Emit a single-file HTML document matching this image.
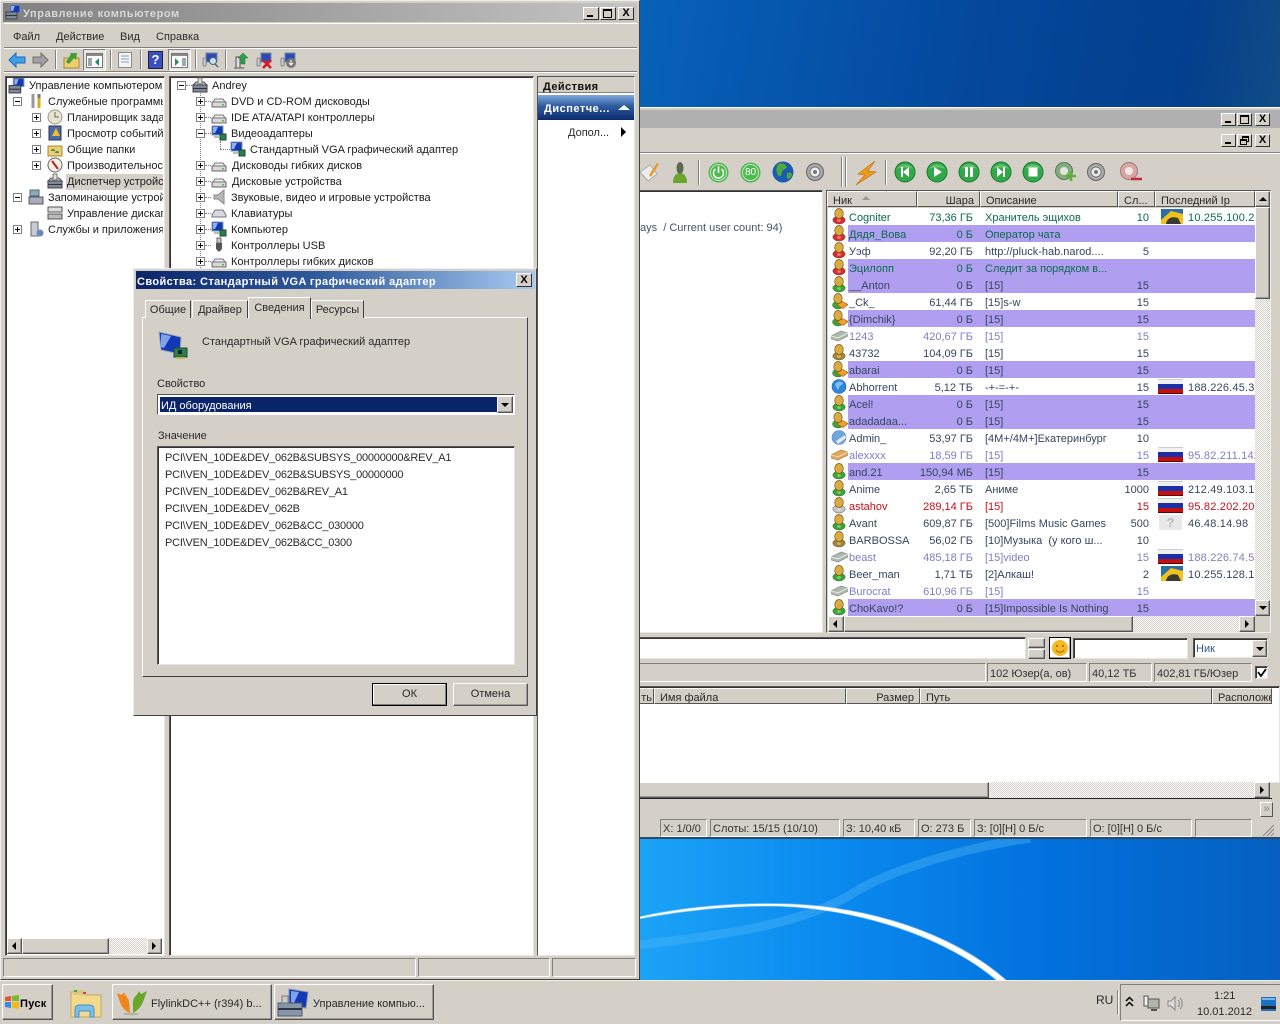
<!DOCTYPE html>
<html lang="ru"><head><meta charset="utf-8"><title>Screen</title>
<style>
*{box-sizing:border-box}
html,body{margin:0;padding:0;width:1280px;height:1024px;overflow:hidden;background:#0a5bb0}
body{position:relative;font:11px/16px "Liberation Sans","DejaVu Sans",sans-serif;color:#2a2a2a}
.a,.t,.ic{position:absolute}
.t{white-space:nowrap;margin-top:1px}
.pci{letter-spacing:-.22px}
.up{position:absolute;background:#d4d0c8;border:1px solid;border-color:#fff #555 #555 #fff;box-shadow:inset -1px -1px 0 #999}
.dn{position:absolute;background:#d4d0c8;border:1px solid;border-color:#808080 #fff #fff #808080}
.w{position:absolute;background:#fff;border:1px solid;border-color:#555 #e8e6e0 #e8e6e0 #555;box-shadow:inset 1px 1px 0 #333}
.g{position:absolute;background:#d4d0c8}
.sep{position:absolute;width:2px;background:linear-gradient(90deg,#808080 50%,#fff 50%)}
.x{position:absolute;width:9px;height:9px;background:#fff;border:1px solid #808080}
.x:before{content:"";position:absolute;left:1px;top:3px;width:5px;height:1px;background:#000}
.x.p:after{content:"";position:absolute;left:3px;top:1px;width:1px;height:5px;background:#000}
.dh{position:absolute;height:0;border-top:1px dotted #808080}
.dv{position:absolute;width:0;border-left:1px dotted #808080}
.ch{position:absolute;background:repeating-conic-gradient(#fff 0 25%,#d4d0c8 0 50%) 0 0/2px 2px}
.tb{position:absolute;width:15px;height:13px;background:#d4d0c8;border:1px solid;border-color:#fff #303030 #303030 #fff;font:bold 11px/11px "Liberation Sans",sans-serif;text-align:center;color:#000}
.tb.big{width:16px}
.tb .mx{position:absolute;left:2px;top:1px;width:9px;height:9px;border:1px solid #000;border-top-width:2px}
.tb .mn{position:absolute;left:3px;bottom:2px;width:6px;height:2px;background:#000}
.tb .rs{position:absolute;left:4px;top:1px;width:7px;height:6px;border:1px solid #000;border-top-width:2px}
.tb .rs2{position:absolute;left:2px;top:4px;width:7px;height:6px;border:1px solid #000;border-top-width:2px;background:#d4d0c8}
.ar{position:absolute;width:0;height:0;border-style:solid;border-color:transparent}
/* user list */
#ul{position:absolute;left:828px;top:208px;width:427px;height:408px;background:#fff;overflow:hidden}
.r{position:relative;height:17px;width:427px;line-height:21px;color:#36465f}
.r.v{background:linear-gradient(90deg,#fff 20px,#b09ff0 20px)}
.r.m{color:#0b6a4f}.r.l{color:#7f7fc4}.r.d{color:#c80f1c}
.r svg{position:absolute;left:3px;top:0;width:17px;height:17px}
.r b,.r i,.r u,.r s,.r em{position:absolute;font-weight:400;font-style:normal;text-decoration:none;white-space:nowrap}
.r b{left:21px}
.r i{right:282px}
.r u{left:157px}
.r s{right:106px}
.r em{left:360px;letter-spacing:.2px}
.f{position:absolute;left:330px;top:1px;width:25px;height:15px;background:linear-gradient(#f0f0f0 0 33%,#1a2fa8 33% 66%,#c40f0f 66%);box-shadow:inset 0 -1px 0 #600,inset 0 1px 0 #ccc}
.h{position:absolute;top:191px;height:16px;background:#d4d0c8;border:1px solid;border-color:#fff #555 #555 #fff;line-height:18px;padding:0 5px;white-space:nowrap;overflow:hidden}
.h2{position:absolute;top:688px;height:16px;background:#d4d0c8;border:1px solid;border-color:#fff #555 #555 #fff;line-height:18px;padding:0 5px;white-space:nowrap;overflow:hidden}
.tree{color:#1c1c1c}
.sb{position:absolute;background:#d4d0c8;border:1px solid;border-color:#808080 #fff #fff #808080;line-height:21px;padding-left:2px;white-space:nowrap;overflow:hidden;color:#333}
.sb.b{line-height:19px}
</style></head>
<body>
<svg width="0" height="0" style="position:absolute">
<defs>
<symbol id="u" viewBox="0 0 17 17"><ellipse cx="8" cy="12" rx="6.200" ry="4" fill="currentColor" stroke="#555" stroke-width=".5"/><ellipse cx="8" cy="5.500" rx="4.300" ry="5" fill="#d9ab42" stroke="#7a5c14" stroke-width=".7"/><ellipse cx="8" cy="12.500" rx="2" ry="1.500" fill="#fff" opacity=".35"/></symbol>
<symbol id="ub" viewBox="0 0 17 17"><ellipse cx="7" cy="12" rx="5.500" ry="4" fill="#3aa535" stroke="#555" stroke-width=".5"/><ellipse cx="7" cy="5.500" rx="4.200" ry="5" fill="#d9ab42" stroke="#7a5c14" stroke-width=".7"/><path d="M6 12l5.500-3.500 5.500 3-5 4z" fill="#f2a02c" stroke="#a55c10" stroke-width=".7"/></symbol>
<symbol id="sv" viewBox="0 0 17 17"><path d="M0 9l10-5 7 2v3L7 14l-7-2z" fill="#aeb8ae" stroke="#7f8a7f" stroke-width=".6"/><path d="M0 9l7 2 10-5" fill="none" stroke="#e5ece5"/></symbol>
<symbol id="svb" viewBox="0 0 17 17"><path d="M0 9l10-5 7 2v3L7 14l-7-2z" fill="#e8a550" stroke="#9a7a50" stroke-width=".6"/><path d="M0 9l7 2 10-5" fill="none" stroke="#ddd"/></symbol>
<symbol id="gl" viewBox="0 0 17 17"><circle cx="8" cy="8.500" r="7" fill="#2f86dc" stroke="#1c5ca8" stroke-width=".6"/><path d="M4 6c3-3 6-3 8-1-1 3-4 2-4 5s-2 2-4-4z" fill="#7cc0f4"/></symbol>
<symbol id="gp" viewBox="0 0 17 17"><circle cx="8" cy="8.500" r="7" fill="#6ea6dc" stroke="#5a86b8" stroke-width=".6"/><path d="M5 12l9-6 1 3-8 6z" fill="#e4ecf2"/></symbol>
<symbol id="img" viewBox="0 0 25 15"><rect x="3" width="22" height="15" fill="#2c6ea5"/><path d="M3 11L13 2l12 3v10H3z" fill="#f0c31c"/><path d="M8 15c1-6 6-8 12-6l3 6z" fill="#3a3a2e"/></symbol>
<symbol id="pc" viewBox="0 0 32 32"><path d="M2 2l22 5-1 17-19-4z" fill="#1238b8" stroke="#9aa7b4"/><path d="M4 4l10 2-7 12-3-1z" fill="#7ea4ee"/><path d="M6 23l14 4-2 3-12-3z" fill="#c9cfd4"/><rect x="17" y="18" width="13" height="9" fill="#2e7d4a" stroke="#12502c"/><rect x="21" y="20" width="4" height="4" fill="#123"/><rect x="19" y="27" width="9" height="2" fill="#c9b34a"/></symbol>
<symbol id="pm" viewBox="0 0 16 16"><rect x="1" y="1" width="11" height="9" fill="#1238b8" stroke="#8a97a4"/><path d="M2 2h5l-3 6H2z" fill="#8eaeee"/><rect x="9" y="9" width="6" height="6" fill="#2e7d4a" stroke="#12502c"/><rect x="3" y="11" width="5" height="2" fill="#bbb"/></symbol>
<symbol id="dr" viewBox="0 0 16 16"><path d="M1 9h14v5H1z" fill="#d8d8d8" stroke="#666"/><path d="M2 9l2-3h8l2 3z" fill="#eee" stroke="#777"/><rect x="11" y="11" width="2" height="1.500" fill="#3c3"/></symbol>
<symbol id="tbx" viewBox="0 0 16 16"><rect x="1" y="8" width="14" height="7" fill="#7a8a9a" stroke="#444"/><path d="M1 8l3-3h8l3 3z" fill="#aebac6" stroke="#555"/><rect x="6" y="1" width="4" height="6" fill="#e0e0d0" stroke="#777"/><rect x="1" y="11" width="14" height="1" fill="#333"/></symbol>
<symbol id="mg" viewBox="0 0 16 16"><rect x="5" y="1" width="10" height="8" fill="#1238b8" stroke="#8a97a4"/><path d="M6 2h4l-2 5H6z" fill="#8eaeee"/><rect x="1" y="8" width="11" height="7" fill="#7a8a9a" stroke="#444"/><rect x="1" y="11" width="11" height="1" fill="#333"/></symbol>
<symbol id="gb" viewBox="0 0 22 22"><circle cx="11" cy="11" r="10" fill="#33a84a" stroke="#1b7a30"/><path d="M3 8C6 2 16 2 19 8 15 6 7 6 3 8z" fill="#77d080" opacity=".7"/></symbol>
<symbol id="sp" viewBox="0 0 20 20"><circle cx="10" cy="10" r="8.500" fill="#a9a9a9" stroke="#666"/><circle cx="10" cy="10" r="5" fill="#ededed" stroke="#7a7a7a"/><circle cx="10" cy="10" r="2" fill="#777"/></symbol>
</defs></svg>

<!-- wallpaper -->
<div class="a" style="left:0;top:0;width:1280px;height:980px;background:#0a5bb0"></div>
<div class="a" style="left:638px;top:0;width:642px;height:108px;background:linear-gradient(100deg,#0862b8 0%,#0555ac 25%,#04479a 55%,#033f8c 85%,#114c86 100%)"></div>
<svg class="a" style="left:638px;top:836px" width="642" height="146" viewBox="638 836 642 146">
<defs><linearGradient id="wp" x1="0" x2="1" y1="0" y2="0"><stop offset="0" stop-color="#1ca3f7"/><stop offset=".3" stop-color="#0a8aee"/><stop offset=".65" stop-color="#0270dc"/><stop offset="1" stop-color="#0560c0"/></linearGradient></defs>
<rect x="638" y="836" width="642" height="146" fill="url(#wp)"/>
<path d="M640 945C720 935 800 925 850 895 880 875 950 850 1030 838" fill="none" stroke="#4fb6f8" stroke-width="9" opacity=".4"/>
<path d="M640 917C680 908 730 903 780 904 860 905 950 930 1008 982H999C947 937 860 909 780 906 730 905 680 911 640 918.500z" fill="#bfe8fd" stroke="#bfe8fd" stroke-width="1.500" opacity=".5"/>
<path d="M640 917C680 908 730 903 780 904 860 905 950 930 1008 982H999C947 937 860 909 780 906 730 905 680 911 640 918.500z" fill="#fff"/>
</svg>

<!-- right window -->
<div class="g" style="left:636px;top:107px;width:644px;height:732px;border-top:1px solid #fff;border-bottom:2px solid #2a4a6a"></div>
<div class="a" style="left:638px;top:110px;width:642px;height:18px;background:#b0b0b0"></div>
<div class="tb" style="left:1221px;top:113px"><span class="mn"></span></div><div class="tb" style="left:1237px;top:113px"><span class="mx"></span></div><div class="tb" style="left:1255px;top:113px">X</div>
<div class="tb" style="left:1221px;top:134px"><span class="mn"></span></div><div class="tb" style="left:1237px;top:134px"><span class="rs"></span><span class="rs2"></span></div><div class="tb" style="left:1255px;top:134px">X</div>
<div class="a" style="left:638px;top:152px;width:642px;height:2px;background:linear-gradient(#808080 50%,#fff 50%)"></div>

<svg class="ic" style="left:640px;top:161px" width="20" height="22" viewBox="0 0 20 22"><path d="M0 11L10 4l7 9-9 7z" fill="#eee" stroke="#aaa"/><path d="M9 14L17 2l2 1-8 13z" fill="#e49a2c"/></svg>
<svg class="ic" style="left:671px;top:160px" width="18" height="24" viewBox="0 0 18 24"><path d="M2 23c0-7 3-10 7-10s7 3 7 10z" fill="#6aa62a"/><ellipse cx="9" cy="8" rx="3.500" ry="6" fill="#5d6a4c"/></svg>
<div class="sep" style="left:698px;top:160px;height:25px"></div>
<svg class="ic" style="left:708px;top:162px" width="21" height="21" viewBox="0 0 21 21"><circle cx="10.500" cy="10.500" r="10" fill="#4fb84f"/><circle cx="10.500" cy="10.500" r="8" fill="none" stroke="#bfeabf"/><path d="M7.500 7a5 5 0 1 0 6 0M10.500 4v7" fill="none" stroke="#fff" stroke-width="1.500"/></svg>
<svg class="ic" style="left:740px;top:162px" width="21" height="21" viewBox="0 0 21 21"><circle cx="10.500" cy="10.500" r="10" fill="#4fb84f"/><circle cx="10.500" cy="10.500" r="8" fill="none" stroke="#bfeabf"/></svg>
<div class="t" style="left:745px;top:164px;color:#fff;font-size:10px">80</div>
<svg class="ic" style="left:772px;top:161px" width="22" height="22" viewBox="0 0 22 22"><circle cx="11" cy="11" r="10.500" fill="#1c5cb0"/><path d="M6 3c4-2 8 0 9 3-1 3-4 1-5 5s-2 6-4 3-2-8 0-11z" fill="#4ea83c"/><path d="M15 12c3-1 5 0 5 2-1 3-4 5-5 3z" fill="#4ea83c"/></svg>
<svg class="ic" style="left:805px;top:162px" width="20" height="20"><use href="#sp"/></svg>
<div class="sep" style="left:841px;top:157px;height:30px"></div><div class="sep" style="left:845px;top:157px;height:30px"></div>
<svg class="ic" style="left:855px;top:160px" width="22" height="26" viewBox="0 0 22 26"><path d="M20 1L3 14l7 1-9 10 20-13-8-1z" fill="#ee9a1c" stroke="#c06a10" stroke-width=".6"/></svg>
<div class="sep" style="left:885px;top:160px;height:25px"></div>
<svg class="ic" style="left:894px;top:161px" width="22" height="22" viewBox="0 0 22 22"><use href="#gb"/><path d="M7 6h2v10H7zM15 6v10l-6-5z" fill="#fff"/></svg>
<svg class="ic" style="left:926px;top:161px" width="22" height="22" viewBox="0 0 22 22"><use href="#gb"/><path d="M8 6v10l8-5z" fill="#fff"/></svg>
<svg class="ic" style="left:958px;top:161px" width="22" height="22" viewBox="0 0 22 22"><use href="#gb"/><path d="M7 6h3v10H7zM12 6h3v10h-3z" fill="#fff"/></svg>
<svg class="ic" style="left:990px;top:161px" width="22" height="22" viewBox="0 0 22 22"><use href="#gb"/><path d="M7 6v10l6-5zM13 6h2v10h-2z" fill="#fff"/></svg>
<svg class="ic" style="left:1022px;top:161px" width="22" height="22" viewBox="0 0 22 22"><use href="#gb"/><rect x="6.500" y="6.500" width="9" height="9" fill="#fff"/></svg>
<svg class="ic" style="left:1054px;top:161px" width="24" height="22" viewBox="0 0 24 22"><svg width="20" height="20" viewBox="0 0 20 20"><circle cx="10" cy="10" r="8.500" fill="#84ad7e" stroke="#5a7a5a"/><circle cx="10" cy="10" r="4" fill="#dfe8df"/></svg><path d="M17 10v10M12 15h10" stroke="#5cb030" stroke-width="2.500"/></svg>
<svg class="ic" style="left:1086px;top:162px" width="20" height="20"><use href="#sp"/></svg>
<svg class="ic" style="left:1119px;top:161px" width="24" height="22" viewBox="0 0 24 22"><svg width="20" height="20" viewBox="0 0 20 20"><circle cx="10" cy="10" r="8.500" fill="#d9a6a6" stroke="#a07a7a"/><circle cx="10" cy="10" r="4" fill="#f3e6e6"/></svg><path d="M12 18h11" stroke="#c8283c" stroke-width="2.500"/></svg>

<!-- chat pane -->
<div class="w" style="left:636px;top:190px;width:187px;height:443px"></div>
<div class="t" style="left:640px;top:219px;color:#44546a">ays&nbsp; / Current user count: 94)</div>

<!-- user list -->
<div class="g" style="left:826px;top:190px;width:445px;height:443px;border:1px solid;border-color:#555 #eee #eee #555"></div>
<div class="h" style="left:827px;width:90px">Ник<span class="ar" style="left:34px;top:4px;border-width:0 4px 4px;border-bottom-color:#999"></span></div>
<div class="h" style="left:917px;width:63px;text-align:right">Шара</div>
<div class="h" style="left:980px;width:138px">Описание</div>
<div class="h" style="left:1118px;width:37px">Сл...</div>
<div class="h" style="left:1155px;width:100px">Последний Ip</div>
<div id="ul">
<div class="r m"><svg style="color:#d92b2b"><use href="#u"/></svg><b>Cogniter</b><i>73,36 ГБ</i><u>Хранитель эщихов</u><s>10</s><svg style="left:330px;width:25px;height:15px;top:1px" viewBox="0 0 25 15"><use href="#img"/></svg><em>10.255.100.23</em></div>
<div class="r m v"><svg style="color:#d92b2b"><use href="#u"/></svg><b>Дядя_Вова</b><i>0 Б</i><u>Оператор чата</u></div>
<div class="r"><svg style="color:#d92b2b"><use href="#u"/></svg><b>Уэф</b><i>92,20 ГБ</i><u>http://pluck-hab.narod....</u><s>5</s></div>
<div class="r m v"><svg style="color:#d92b2b"><use href="#u"/></svg><b>Эцилопп</b><i>0 Б</i><u>Следит за порядком в...</u></div>
<div class="r v"><svg style="color:#36a832"><use href="#u"/></svg><b>__Anton</b><i>0 Б</i><u>[15]</u><s>15</s></div>
<div class="r"><svg><use href="#ub"/></svg><b>_Ck_</b><i>61,44 ГБ</i><u>[15]s-w</u><s>15</s></div>
<div class="r v"><svg><use href="#ub"/></svg><b>{Dimchik}</b><i>0 Б</i><u>[15]</u><s>15</s></div>
<div class="r l"><svg><use href="#sv"/></svg><b>1243</b><i>420,67 ГБ</i><u>[15]</u><s>15</s></div>
<div class="r"><svg style="color:#a8842c"><use href="#u"/></svg><b>43732</b><i>104,09 ГБ</i><u>[15]</u><s>15</s></div>
<div class="r v"><svg><use href="#ub"/></svg><b>abarai</b><i>0 Б</i><u>[15]</u><s>15</s></div>
<div class="r"><svg><use href="#gl"/></svg><b>Abhorrent</b><i>5,12 ТБ</i><u>-+-=-+-</u><s>15</s><span class="f"></span><em>188.226.45.33</em></div>
<div class="r v"><svg style="color:#36a832"><use href="#u"/></svg><b>Acel!</b><i>0 Б</i><u>[15]</u><s>15</s></div>
<div class="r v"><svg><use href="#ub"/></svg><b>adadadaa...</b><i>0 Б</i><u>[15]</u><s>15</s></div>
<div class="r"><svg><use href="#gp"/></svg><b>Admin_</b><i>53,97 ГБ</i><u>[4M+/4M+]Екатеринбург</u><s>10</s></div>
<div class="r l"><svg><use href="#svb"/></svg><b>alexxxx</b><i>18,59 ГБ</i><u>[15]</u><s>15</s><span class="f"></span><em>95.82.211.142</em></div>
<div class="r v"><svg style="color:#36a832"><use href="#u"/></svg><b>and.21</b><i>150,94 МБ</i><u>[15]</u><s>15</s></div>
<div class="r"><svg style="color:#36a832"><use href="#u"/></svg><b>Anime</b><i>2,65 ТБ</i><u>Аниме</u><s>1000</s><span class="f"></span><em>212.49.103.13</em></div>
<div class="r d"><svg style="color:#c4c4c4"><use href="#u"/></svg><b>astahov</b><i>289,14 ГБ</i><u>[15]</u><s>15</s><span class="f"></span><em>95.82.202.203</em></div>
<div class="r"><svg style="color:#36a832"><use href="#u"/></svg><b>Avant</b><i>609,87 ГБ</i><u>[500]Films Music Games</u><s>500</s><span class="f" style="background:#e8e8e8;box-shadow:none;color:#bbb;font:bold 13px/15px 'Liberation Sans',sans-serif;text-align:center;left:331px;width:23px">?</span><em>46.48.14.98</em></div>
<div class="r"><svg style="color:#a8842c"><use href="#u"/></svg><b>BARBOSSA</b><i>56,02 ГБ</i><u>[10]Музыка&nbsp; (у кого ш...</u><s>10</s></div>
<div class="r l"><svg><use href="#sv"/></svg><b>beast</b><i>485,18 ГБ</i><u>[15]video</u><s>15</s><span class="f"></span><em>188.226.74.58</em></div>
<div class="r"><svg style="color:#36a832"><use href="#u"/></svg><b>Beer_man</b><i>1,71 ТБ</i><u>[2]Алкаш!</u><s>2</s><svg style="left:330px;width:25px;height:15px;top:1px" viewBox="0 0 25 15"><use href="#img"/></svg><em>10.255.128.13</em></div>
<div class="r l"><svg><use href="#sv"/></svg><b>Burocrat</b><i>610,96 ГБ</i><u>[15]</u><s>15</s></div>
<div class="r v"><svg style="color:#36a832"><use href="#u"/></svg><b>ChoKavo!?</b><i>0 Б</i><u>[15]Impossible Is Nothing</u><s>15</s></div>
</div>
<!-- list scrollbars -->
<div class="ch" style="left:1255px;top:191px;width:15px;height:425px"></div>
<div class="up" style="left:1255px;top:191px;width:15px;height:16px"><span class="ar" style="left:3px;top:5px;border-width:0 4px 4px;border-bottom-color:#000"></span></div>
<div class="up" style="left:1255px;top:207px;width:15px;height:92px"></div>
<div class="up" style="left:1255px;top:600px;width:15px;height:16px"><span class="ar" style="left:3px;top:5px;border-width:4px 4px 0;border-top-color:#000"></span></div>
<div class="ch" style="left:828px;top:616px;width:426px;height:16px"></div>
<div class="up" style="left:828px;top:616px;width:16px;height:16px"><span class="ar" style="left:4px;top:3px;border-width:4px 4px 4px 0;border-right-color:#000"></span></div>
<div class="up" style="left:844px;top:616px;width:289px;height:16px"></div>
<div class="up" style="left:1239px;top:616px;width:16px;height:16px"><span class="ar" style="left:5px;top:3px;border-width:4px 0 4px 4px;border-left-color:#000"></span></div>

<!-- chat input row -->
<div class="w" style="left:636px;top:637px;width:390px;height:22px"></div>
<div class="up" style="left:1028px;top:638px;width:17px;height:10px"></div>
<div class="up" style="left:1028px;top:649px;width:17px;height:10px"></div>
<div class="a" style="left:1049px;top:637px;width:22px;height:22px;background:#fff;border:1px solid #000;box-shadow:inset -1px -1px 0 #999"></div>
<svg class="ic" style="left:1051px;top:639px" width="18" height="18" viewBox="0 0 18 18"><circle cx="9" cy="9" r="8" fill="#f5b921"/><circle cx="6" cy="7" r="1" fill="#a06010"/><circle cx="12" cy="7" r="1" fill="#a06010"/><path d="M5 11c2 3 6 3 8 0" fill="none" stroke="#a06010"/></svg>
<div class="w" style="left:1073px;top:638px;width:115px;height:21px"></div>
<div class="w" style="left:1193px;top:638px;width:75px;height:20px"></div>
<div class="t" style="left:1196px;top:640px;color:#33558c">Ник</div>
<div class="up" style="left:1252px;top:640px;width:15px;height:17px"><span class="ar" style="left:3px;top:6px;border-width:4px 4px 0;border-top-color:#000"></span></div>

<div class="sb" style="left:636px;top:663px;width:350px;height:19px"></div>
<div class="sb" style="left:987px;top:663px;width:100px;height:19px">102 Юзер(а, ов)</div>
<div class="sb" style="left:1089px;top:663px;width:63px;height:19px">40,12 ТБ</div>
<div class="sb" style="left:1154px;top:663px;width:98px;height:19px">402,81 ГБ/Юзер</div>
<div class="w" style="left:1255px;top:666px;width:13px;height:13px"></div>
<svg class="ic" style="left:1257px;top:668px" width="10" height="10" viewBox="0 0 10 10"><path d="M1 4l3 4 5-7" fill="none" stroke="#000" stroke-width="1.800"/></svg>

<!-- file list -->
<div class="w" style="left:636px;top:686px;width:644px;height:97px"></div>
<div class="h2" style="left:636px;width:18px;text-align:right;padding:0 1px">ть</div>
<div class="h2" style="left:654px;width:192px">Имя файла</div>
<div class="h2" style="left:846px;width:74px;text-align:right">Размер</div>
<div class="h2" style="left:920px;width:292px">Путь</div>
<div class="h2" style="left:1212px;width:60px">Расположе</div>
<div class="ch" style="left:638px;top:782px;width:632px;height:16px"></div>
<div class="up" style="left:638px;top:782px;width:351px;height:16px"></div>
<div class="up" style="left:1254px;top:782px;width:16px;height:16px"><span class="ar" style="left:5px;top:3px;border-width:4px 0 4px 4px;border-left-color:#000"></span></div>
<div class="a" style="left:638px;top:798px;width:634px;height:1px;background:#222"></div>
<div class="up" style="left:1260px;top:802px;width:13px;height:15px;color:#888;line-height:12px;text-align:center;box-shadow:none">»</div>

<div class="sb b" style="left:660px;top:819px;width:47px;height:18px">X: 1/0/0</div>
<div class="sb b" style="left:710px;top:819px;width:130px;height:18px">Слоты: 15/15 (10/10)</div>
<div class="sb b" style="left:843px;top:819px;width:72px;height:18px">З: 10,40 кБ</div>
<div class="sb b" style="left:918px;top:819px;width:53px;height:18px">О: 273 Б</div>
<div class="sb b" style="left:974px;top:819px;width:113px;height:18px">З: [0][Н] 0 Б/с</div>
<div class="sb b" style="left:1090px;top:819px;width:102px;height:18px">О: [0][Н] 0 Б/с</div>
<div class="sb b" style="left:1195px;top:819px;width:57px;height:18px"></div>
<svg class="ic" style="left:1262px;top:824px" width="12" height="12"><path d="M1 12L12 1M5 12l7-7M9 12l3-3" stroke="#888"/></svg>

<!-- left window -->
<div class="g" style="left:0;top:0;width:640px;height:980px;border:1px solid;border-color:#eee #404040 #404040 #eee;box-shadow:inset 0 0 0 2px #d4d0c8"></div>
<div class="a" style="left:3px;top:3px;width:634px;height:19px;background:linear-gradient(90deg,#808080,#c4c4c4)"></div>
<svg class="ic" style="left:5px;top:4px" width="16" height="16"><use href="#mg"/></svg>
<div class="t" style="left:23px;top:5px;color:#d8d8d4;font-weight:bold;font-size:11px;letter-spacing:.6px">Управление компьютером</div>
<div class="tb big" style="left:583px;top:7px"><span class="mn"></span></div><div class="tb big" style="left:600px;top:7px"><span class="mx"></span></div><div class="tb big" style="left:618px;top:7px">X</div>
<div class="a" style="left:4px;top:23px;width:633px;height:1px;background:#fff"></div>
<div class="a" style="left:4px;top:47px;width:633px;height:2px;background:linear-gradient(#808080 50%,#fff 50%)"></div>
<div class="a" style="left:4px;top:71px;width:633px;height:2px;background:linear-gradient(#808080 50%,#fff 50%)"></div>
<div class="t" style="left:13px;top:28px">Файл</div><div class="t" style="left:56px;top:28px">Действие</div><div class="t" style="left:120px;top:28px">Вид</div><div class="t" style="left:156px;top:28px">Справка</div>

<!-- left toolbar -->
<svg class="ic" style="left:8px;top:52px" width="18" height="16" viewBox="0 0 18 16"><path d="M1 8L8 1v4h9v6H8v4z" fill="#3fa0ea" stroke="#1a6cb8"/></svg>
<svg class="ic" style="left:32px;top:52px" width="17" height="16" viewBox="0 0 17 16"><path d="M16 8L9 1v4H1v6h8v4z" fill="#a0a0a0" stroke="#707070"/></svg>
<div class="sep" style="left:55px;top:50px;height:19px"></div>
<svg class="ic" style="left:63px;top:51px" width="17" height="18" viewBox="0 0 17 18"><path d="M1 7h15v10H1z" fill="#edcf6e" stroke="#a8893a"/><path d="M3 11l5-8-1-1h7l-1 7-2-2-5 6z" fill="#3fa035"/></svg>
<div class="a" style="left:83px;top:49px;width:23px;height:22px;background:#e8e6e0;border:1px solid;border-color:#808080 #fff #fff #808080"></div>
<svg class="ic" style="left:86px;top:53px" width="17" height="15" viewBox="0 0 17 15"><rect x=".5" y=".5" width="16" height="14" fill="#fff" stroke="#777"/><rect x="1" y="1" width="15" height="2" fill="#8a8a8a"/><rect x="2" y="5" width="4" height="8" fill="#9aa"/><path d="M13 5v8l-4-4z" fill="#2a8a5a"/></svg>
<div class="sep" style="left:110px;top:50px;height:19px"></div>
<svg class="ic" style="left:117px;top:52px" width="16" height="17" viewBox="0 0 16 17"><rect x="1.500" y=".5" width="13" height="15" fill="#f4f4f4" stroke="#8a8a8a"/><path d="M4 4h8M4 7h8M4 10h8" stroke="#8aa0b4"/></svg>
<div class="sep" style="left:140px;top:50px;height:19px"></div>
<div class="a" style="left:148px;top:51px;width:15px;height:18px;background:#3a4fc0;border:1px solid #223;color:#fff;font:bold 13px/16px 'Liberation Sans',sans-serif;text-align:center">?</div>
<div class="a" style="left:168px;top:49px;width:23px;height:22px;background:#e8e6e0;border:1px solid;border-color:#808080 #fff #fff #808080"></div>
<svg class="ic" style="left:171px;top:53px" width="17" height="15" viewBox="0 0 17 15"><rect x=".5" y=".5" width="16" height="14" fill="#fff" stroke="#777"/><rect x="1" y="1" width="15" height="2" fill="#8a8a8a"/><rect x="11" y="5" width="4" height="8" fill="#9aa"/><path d="M4 5v8l4-4z" fill="#2a8a5a"/></svg>
<div class="sep" style="left:195px;top:50px;height:19px"></div>
<svg class="ic" style="left:202px;top:52px" width="17" height="17" viewBox="0 0 17 17"><rect x="4" y="1" width="11" height="9" fill="#2a4ab8" stroke="#789"/><rect x="1" y="6" width="3" height="8" rx="1" fill="#ccc" stroke="#888"/><circle cx="11" cy="9" r="3.500" fill="#cde" stroke="#567"/><path d="M13 12l3 3" stroke="#567" stroke-width="1.500"/></svg>
<div class="sep" style="left:225px;top:50px;height:19px"></div>
<svg class="ic" style="left:233px;top:52px" width="16" height="17" viewBox="0 0 16 17"><path d="M1 16h10M3 16V5h4v11" fill="#ddd" stroke="#555"/><path d="M10 1l5 5h-3v6H8V6H5z" fill="#2fa04a" stroke="#1a7030" stroke-width=".5"/></svg>
<svg class="ic" style="left:256px;top:52px" width="17" height="17" viewBox="0 0 17 17"><rect x="5" y="1" width="10" height="9" fill="#2a4ab8" stroke="#789"/><rect x="1" y="6" width="3" height="8" rx="1" fill="#ccc" stroke="#888"/><path d="M7 8l8 8M15 8l-8 8" stroke="#d01c1c" stroke-width="2.500"/></svg>
<svg class="ic" style="left:280px;top:52px" width="17" height="17" viewBox="0 0 17 17"><rect x="5" y="1" width="10" height="9" fill="#2a4ab8" stroke="#789"/><rect x="1" y="6" width="3" height="8" rx="1" fill="#ccc" stroke="#888"/><circle cx="11" cy="11" r="5" fill="#777"/><path d="M11 8v5M9 11l2 2 2-2" stroke="#fff" fill="none"/></svg>

<!-- left tree pane -->
<div class="w" style="left:5px;top:76px;width:160px;height:880px"></div>
<div class="a" style="left:7px;top:78px;width:156px;height:858px;overflow:hidden" id="lt">
<svg class="ic" style="left:1px;top:-1px" width="17" height="17"><use href="#mg"/></svg>
<div class="t tree" style="left:22px;top:-1px">Управление компьютером</div>
<div class="x" style="left:6px;top:19px"></div>
<svg class="ic" style="left:21px;top:15px" width="16" height="16" viewBox="0 0 16 16"><path d="M5 1v14" stroke="#999" stroke-width="3"/><path d="M11 1v4" stroke="#777" stroke-width="3"/><path d="M11 5v10" stroke="#e0a820" stroke-width="3"/></svg>
<div class="t tree" style="left:41px;top:15px">Служебные программы</div>
<svg class="ic" style="left:40px;top:31px" width="16" height="16" viewBox="0 0 16 16"><circle cx="8" cy="8" r="7" fill="#e8e4d0" stroke="#998"/><path d="M8 3v5h4" stroke="#666" fill="none"/></svg>
<div class="t tree" style="left:60px;top:31px">Планировщик зада</div>
<svg class="ic" style="left:40px;top:47px" width="16" height="16" viewBox="0 0 16 16"><rect x="2" y="1" width="12" height="14" fill="#4a6ab0" stroke="#334"/><path d="M9 3l4 8H5z" fill="#f0c020"/></svg>
<div class="t tree" style="left:60px;top:47px">Просмотр событий</div>
<svg class="ic" style="left:40px;top:63px" width="16" height="16" viewBox="0 0 16 16"><path d="M1 5h14v10H1z" fill="#edcf6e" stroke="#a8893a"/><path d="M4 10a2 2 0 0 1 4 0zM8 12a2 2 0 0 1 4 0z" fill="#486"/></svg>
<div class="t tree" style="left:60px;top:63px">Общие папки</div>
<svg class="ic" style="left:40px;top:79px" width="16" height="16" viewBox="0 0 16 16"><circle cx="8" cy="8" r="7" fill="#f4f0e4" stroke="#666"/><path d="M5 4l6 8" stroke="#c02020" stroke-width="2"/></svg>
<div class="t tree" style="left:60px;top:79px">Производительнос</div>
<div class="a" style="left:59px;top:96px;width:97px;height:16px;background:#d4d0c8"></div>
<svg class="ic" style="left:40px;top:95px" width="16" height="16"><use href="#tbx"/></svg>
<div class="t tree" style="left:60px;top:95px">Диспетчер устройс</div>
<div class="x" style="left:6px;top:115px"></div>
<svg class="ic" style="left:21px;top:111px" width="16" height="16" viewBox="0 0 16 16"><rect x="2" y="1" width="9" height="6" fill="#8ab" stroke="#567"/><rect x="1" y="8" width="14" height="7" fill="#aab" stroke="#556"/></svg>
<div class="t tree" style="left:41px;top:111px">Запоминающие устрой</div>
<svg class="ic" style="left:40px;top:127px" width="16" height="16" viewBox="0 0 16 16"><rect x="1" y="2" width="14" height="5" fill="#ddd" stroke="#555"/><rect x="1" y="9" width="14" height="5" fill="#bbb" stroke="#555"/></svg>
<div class="t tree" style="left:60px;top:127px">Управление дискаг</div>
<svg class="ic" style="left:21px;top:143px" width="16" height="16" viewBox="0 0 16 16"><rect x="3" y="1" width="7" height="14" fill="#c8ccd4" stroke="#667"/><circle cx="12" cy="12" r="3.500" fill="#6a8aba"/></svg>
<div class="t tree" style="left:41px;top:143px">Службы и приложения</div>
</div>
<div class="x p" style="left:32px;top:113px"></div><div class="x p" style="left:32px;top:129px"></div><div class="x p" style="left:32px;top:145px"></div><div class="x p" style="left:32px;top:161px"></div>
<div class="x p" style="left:13px;top:225px"></div>
<div class="ch" style="left:7px;top:938px;width:155px;height:16px"></div>
<div class="up" style="left:7px;top:938px;width:15px;height:16px"><span class="ar" style="left:4px;top:3px;border-width:4px 4px 4px 0;border-right-color:#000"></span></div>
<div class="up" style="left:22px;top:938px;width:87px;height:16px"></div>
<div class="up" style="left:147px;top:938px;width:15px;height:16px"><span class="ar" style="left:4px;top:3px;border-width:4px 0 4px 4px;border-left-color:#000"></span></div>

<!-- middle pane -->
<div class="w" style="left:169px;top:76px;width:365px;height:880px"></div>
<div class="dv" style="left:200px;top:93px;height:175px"></div>
<div class="x" style="left:177px;top:81px"></div><div class="dh" style="left:186px;top:85px;width:6px"></div>
<svg class="ic" style="left:192px;top:77px" width="16" height="16"><use href="#tbx"/></svg>
<div class="t tree" style="left:212px;top:77px">Andrey</div>

<div class="dh" style="left:205px;top:101px;width:6px"></div><div class="dh" style="left:205px;top:117px;width:6px"></div><div class="dh" style="left:205px;top:133px;width:6px"></div><div class="dh" style="left:205px;top:165px;width:6px"></div><div class="dh" style="left:205px;top:181px;width:6px"></div><div class="dh" style="left:205px;top:197px;width:6px"></div><div class="dh" style="left:205px;top:213px;width:6px"></div><div class="dh" style="left:205px;top:229px;width:6px"></div><div class="dh" style="left:205px;top:245px;width:6px"></div><div class="dh" style="left:205px;top:261px;width:6px"></div>
<div class="x p" style="left:196px;top:97px"></div><svg class="ic" style="left:211px;top:93px" width="16" height="16"><use href="#dr"/></svg><div class="t tree" style="left:231px;top:93px">DVD и CD-ROM дисководы</div>
<div class="x p" style="left:196px;top:113px"></div><svg class="ic" style="left:211px;top:109px" width="16" height="16"><use href="#dr"/></svg><div class="t tree" style="left:231px;top:109px">IDE ATA/ATAPI контроллеры</div>
<div class="x" style="left:196px;top:129px"></div><svg class="ic" style="left:211px;top:125px" width="16" height="16"><use href="#pm"/></svg><div class="t tree" style="left:231px;top:125px">Видеоадаптеры</div>
<div class="dh" style="left:220px;top:149px;width:10px"></div><div class="dv" style="left:220px;top:141px;height:8px"></div>
<svg class="ic" style="left:230px;top:141px" width="16" height="16"><use href="#pm"/></svg><div class="t tree" style="left:250px;top:141px">Стандартный VGA графический адаптер</div>
<div class="x p" style="left:196px;top:161px"></div><svg class="ic" style="left:211px;top:157px" width="16" height="16"><use href="#dr"/></svg><div class="t tree" style="left:232px;top:157px">Дисководы гибких дисков</div>
<div class="x p" style="left:196px;top:177px"></div><svg class="ic" style="left:211px;top:173px" width="16" height="16"><use href="#dr"/></svg><div class="t tree" style="left:232px;top:173px">Дисковые устройства</div>
<div class="x p" style="left:196px;top:193px"></div><svg class="ic" style="left:211px;top:189px" width="16" height="16" viewBox="0 0 16 16"><path d="M3 6h4l6-5v14l-6-5H3z" fill="#b8b8b8" stroke="#888"/></svg><div class="t tree" style="left:231px;top:189px">Звуковые, видео и игровые устройства</div>
<div class="x p" style="left:196px;top:209px"></div><svg class="ic" style="left:211px;top:205px" width="16" height="16" viewBox="0 0 16 16"><path d="M1 10l3-5h8l3 5v2H1z" fill="#d8d8e0" stroke="#777"/></svg><div class="t tree" style="left:231px;top:205px">Клавиатуры</div>
<div class="x p" style="left:196px;top:225px"></div><svg class="ic" style="left:211px;top:221px" width="16" height="16"><use href="#pm"/></svg><div class="t tree" style="left:231px;top:221px">Компьютер</div>
<div class="x p" style="left:196px;top:241px"></div><svg class="ic" style="left:211px;top:237px" width="16" height="16" viewBox="0 0 16 16"><rect x="6" y="1" width="4" height="5" fill="#ccc" stroke="#666"/><path d="M5 6h6v6l-3 3-3-3z" fill="#555"/></svg><div class="t tree" style="left:231px;top:237px">Контроллеры USB</div>
<div class="x p" style="left:196px;top:257px"></div><svg class="ic" style="left:211px;top:253px" width="16" height="16"><use href="#dr"/></svg><div class="t tree" style="left:231px;top:253px">Контроллеры гибких дисков</div>

<!-- actions pane -->
<div class="a" style="left:537px;top:76px;width:98px;height:880px;background:#fff;border:1px solid;border-color:#555 #e8e6e0 #e8e6e0 #555"></div>
<div class="g" style="left:538px;top:77px;width:96px;height:16px;border-bottom:1px solid #808080"></div>
<div class="t" style="left:543px;top:78px;font-weight:bold;color:#111;letter-spacing:.4px">Действия</div>
<div class="a" style="left:538px;top:95px;width:96px;height:25px;background:linear-gradient(#7fa9de,#2d5a9e 45%,#0c2a6c)"></div>
<div class="t" style="left:544px;top:100px;font-weight:bold;color:#fff;letter-spacing:.5px">Диспетче...</div>
<div class="ar" style="left:618px;top:105px;border-width:0 6px 5px;border-bottom-color:#fff"></div>
<div class="t" style="left:568px;top:124px">Допол...</div>
<div class="ar" style="left:621px;top:127px;border-width:5px 0 5px 5px;border-left-color:#000"></div>

<!-- status -->
<div class="dn" style="left:3px;top:958px;width:413px;height:19px"></div>
<div class="dn" style="left:418px;top:958px;width:132px;height:19px"></div>
<div class="dn" style="left:552px;top:958px;width:84px;height:19px"></div>

<!-- dialog -->
<div class="g" style="left:133px;top:268px;width:404px;height:448px;border:1px solid;border-color:#eee #404040 #404040 #eee"></div>
<div class="a" style="left:136px;top:271px;width:399px;height:18px;background:linear-gradient(90deg,#0a246a,#2f5a9c 45%,#a6caf0)"></div>
<div class="t" style="left:137px;top:273px;font-weight:bold;color:#fff;letter-spacing:.4px">Свойства: Стандартный VGA графический адаптер</div>
<div class="tb" style="left:516px;top:273px;width:16px;height:14px;line-height:12px">X</div>

<div class="a" style="left:142px;top:317px;width:386px;height:360px;background:#d4d0c8;border:1px solid;border-color:#fff #404040 #404040 #fff"></div>
<div class="a" style="left:145px;top:300px;width:46px;height:18px;background:#d4d0c8;border:1px solid;border-color:#fff #404040 transparent #fff;border-bottom:0;text-align:center;line-height:18px">Общие</div>
<div class="a" style="left:192px;top:300px;width:56px;height:18px;background:#d4d0c8;border:1px solid;border-color:#fff #404040 transparent #fff;border-bottom:0;text-align:center;line-height:18px">Драйвер</div>
<div class="a" style="left:248px;top:297px;width:63px;height:22px;background:#d4d0c8;border:1px solid;border-color:#fff #404040 transparent #fff;border-bottom:0;text-align:center;line-height:21px">Сведения</div>
<div class="a" style="left:311px;top:300px;width:53px;height:18px;background:#d4d0c8;border:1px solid;border-color:#fff #404040 transparent #fff;border-bottom:0;text-align:center;line-height:18px">Ресурсы</div>

<svg class="ic" style="left:157px;top:330px" width="32" height="32"><use href="#pc"/></svg>
<div class="t" style="left:202px;top:333px">Стандартный VGA графический адаптер</div>
<div class="t" style="left:157px;top:375px">Свойство</div>
<div class="a" style="left:157px;top:394px;width:358px;height:21px;background:#fff;border:1px solid;border-color:#555 #fff #fff #555"></div>
<div class="a" style="left:160px;top:397px;width:337px;height:15px;background:#0a246a"></div>
<div class="t" style="left:161px;top:397px;color:#fff">ИД оборудования</div>
<div class="up" style="left:497px;top:396px;width:16px;height:17px"><span class="ar" style="left:3px;top:6px;border-width:4px 4px 0;border-top-color:#000"></span></div>
<div class="t" style="left:158px;top:427px">Значение</div>
<div class="w" style="left:157px;top:446px;width:358px;height:219px"></div>
<div class="t pci" style="left:165px;top:449px">PCI\VEN_10DE&amp;DEV_062B&amp;SUBSYS_00000000&amp;REV_A1</div>
<div class="t pci" style="left:165px;top:466px">PCI\VEN_10DE&amp;DEV_062B&amp;SUBSYS_00000000</div>
<div class="t pci" style="left:165px;top:483px">PCI\VEN_10DE&amp;DEV_062B&amp;REV_A1</div>
<div class="t pci" style="left:165px;top:500px">PCI\VEN_10DE&amp;DEV_062B</div>
<div class="t pci" style="left:165px;top:517px">PCI\VEN_10DE&amp;DEV_062B&amp;CC_030000</div>
<div class="t pci" style="left:165px;top:534px">PCI\VEN_10DE&amp;DEV_062B&amp;CC_0300</div>
<div class="up" style="left:372px;top:683px;width:75px;height:23px;border:1px solid #000;box-shadow:inset -1px -1px 0 #808080,inset 1px 1px 0 #fff;text-align:center;line-height:21px">ОК</div>
<div class="up" style="left:453px;top:683px;width:75px;height:23px;text-align:center;line-height:20px">Отмена</div>

<!-- taskbar -->
<div class="g" style="left:0;top:980px;width:1280px;height:44px;border-top:1px solid #f2f0ea"></div>
<div class="up" style="left:2px;top:984px;width:51px;height:36px"></div>
<svg class="ic" style="left:4px;top:994px" width="16" height="16" viewBox="0 0 16 16"><path d="M1 3l6-1v5H1z" fill="#e8572c"/><path d="M8 2l7-1v6H8z" fill="#7cb82c"/><path d="M1 8h6v6l-6-1z" fill="#3a8ae0"/><path d="M8 8h7v7l-7-1z" fill="#f4b81c"/></svg>
<div class="t" style="left:20px;top:995px;font-weight:bold;color:#000;letter-spacing:.3px">Пуск</div>
<svg class="ic" style="left:70px;top:989px" width="32" height="29" viewBox="0 0 32 29"><path d="M1 3h12l2 3h16v22H1z" fill="#f2d98c" stroke="#c8a860"/><rect x="3" y="1" width="12" height="5" fill="#d8c888"/><rect x="4" y="1" width="3" height="2" fill="#4a4"/><rect x="13" y="3" width="3" height="2" fill="#c43"/><path d="M5 28v-8c0-3 2-4 5-4h9c3 0 5 1 5 4v8h-4v-6H9v6z" fill="#7ac0ec" stroke="#4a90c0"/></svg>
<div class="up" style="left:112px;top:984px;width:160px;height:36px"></div>
<svg class="ic" style="left:116px;top:988px" width="32" height="28" viewBox="0 0 32 28"><path d="M14 25C9 23 6 20 4 14L1 5l5 2 2-3c1 4 4 5 5 9z" fill="#f0851c"/><path d="M17 25c5-3 8-6 10-11l4-11-6 3-2-3c-2 5-6 6-6 11z" fill="#6aa52c"/><ellipse cx="15" cy="26" rx="8" ry="1.500" fill="#b8b4ac"/></svg>
<div class="t" style="left:151px;top:995px">FlylinkDC++ (r394) b...</div>
<div class="up" style="left:274px;top:984px;width:160px;height:36px"></div>
<svg class="ic" style="left:277px;top:987px" width="32" height="30" viewBox="0 0 32 30"><path d="M12 2l19 3-2 16-17-3z" fill="#1238b8" stroke="#8a97a4"/><path d="M14 4l8 1-5 11-3-1z" fill="#7ea4ee"/><rect x="1" y="16" width="24" height="13" fill="#8496a8" stroke="#556"/><rect x="1" y="21" width="24" height="2" fill="#334"/><rect x="5" y="9" width="6" height="7" fill="#ccc" stroke="#777"/></svg>
<div class="t" style="left:313px;top:995px">Управление компью...</div>
<div class="t" style="left:1096px;top:991px;font-size:12px">RU</div>
<div class="sep" style="left:1117px;top:990px;height:24px"></div>
<div class="dn" style="left:1120px;top:984px;width:160px;height:37px;border-right:0"></div>
<svg class="ic" style="left:1125px;top:996px" width="9" height="11" viewBox="0 0 9 11"><path d="M1 5l3.500-3.500L8 5M1 10l3.500-3.500L8 10" fill="none" stroke="#000" stroke-width="1.500"/></svg>
<svg class="ic" style="left:1143px;top:995px" width="17" height="17" viewBox="0 0 17 17"><rect x="5" y="4" width="11" height="9" fill="#b0b6a8" stroke="#555"/><rect x="1" y="1" width="4" height="10" fill="#eee" stroke="#555"/><path d="M8 15h6" stroke="#555" stroke-width="2"/></svg>
<svg class="ic" style="left:1167px;top:995px" width="17" height="17" viewBox="0 0 17 17"><path d="M1 6h3l4-4v13l-4-4H1z" fill="#ddd" stroke="#888"/><path d="M11 5c2 2 2 5 0 7M13 3c3 3 3 8 0 11" fill="none" stroke="#888"/></svg>
<div class="t" style="left:1214px;top:987px">1:21</div>
<div class="t" style="left:1197px;top:1003px">10.01.2012</div>
<svg class="ic" style="left:1261px;top:997px" width="15" height="14" viewBox="0 0 15 14"><rect width="15" height="14" fill="#1c70c0"/><rect y="9" width="15" height="3" fill="#222"/><rect x="1" y="1" width="13" height="2" fill="#7ab8e8"/></svg>
</body></html>
